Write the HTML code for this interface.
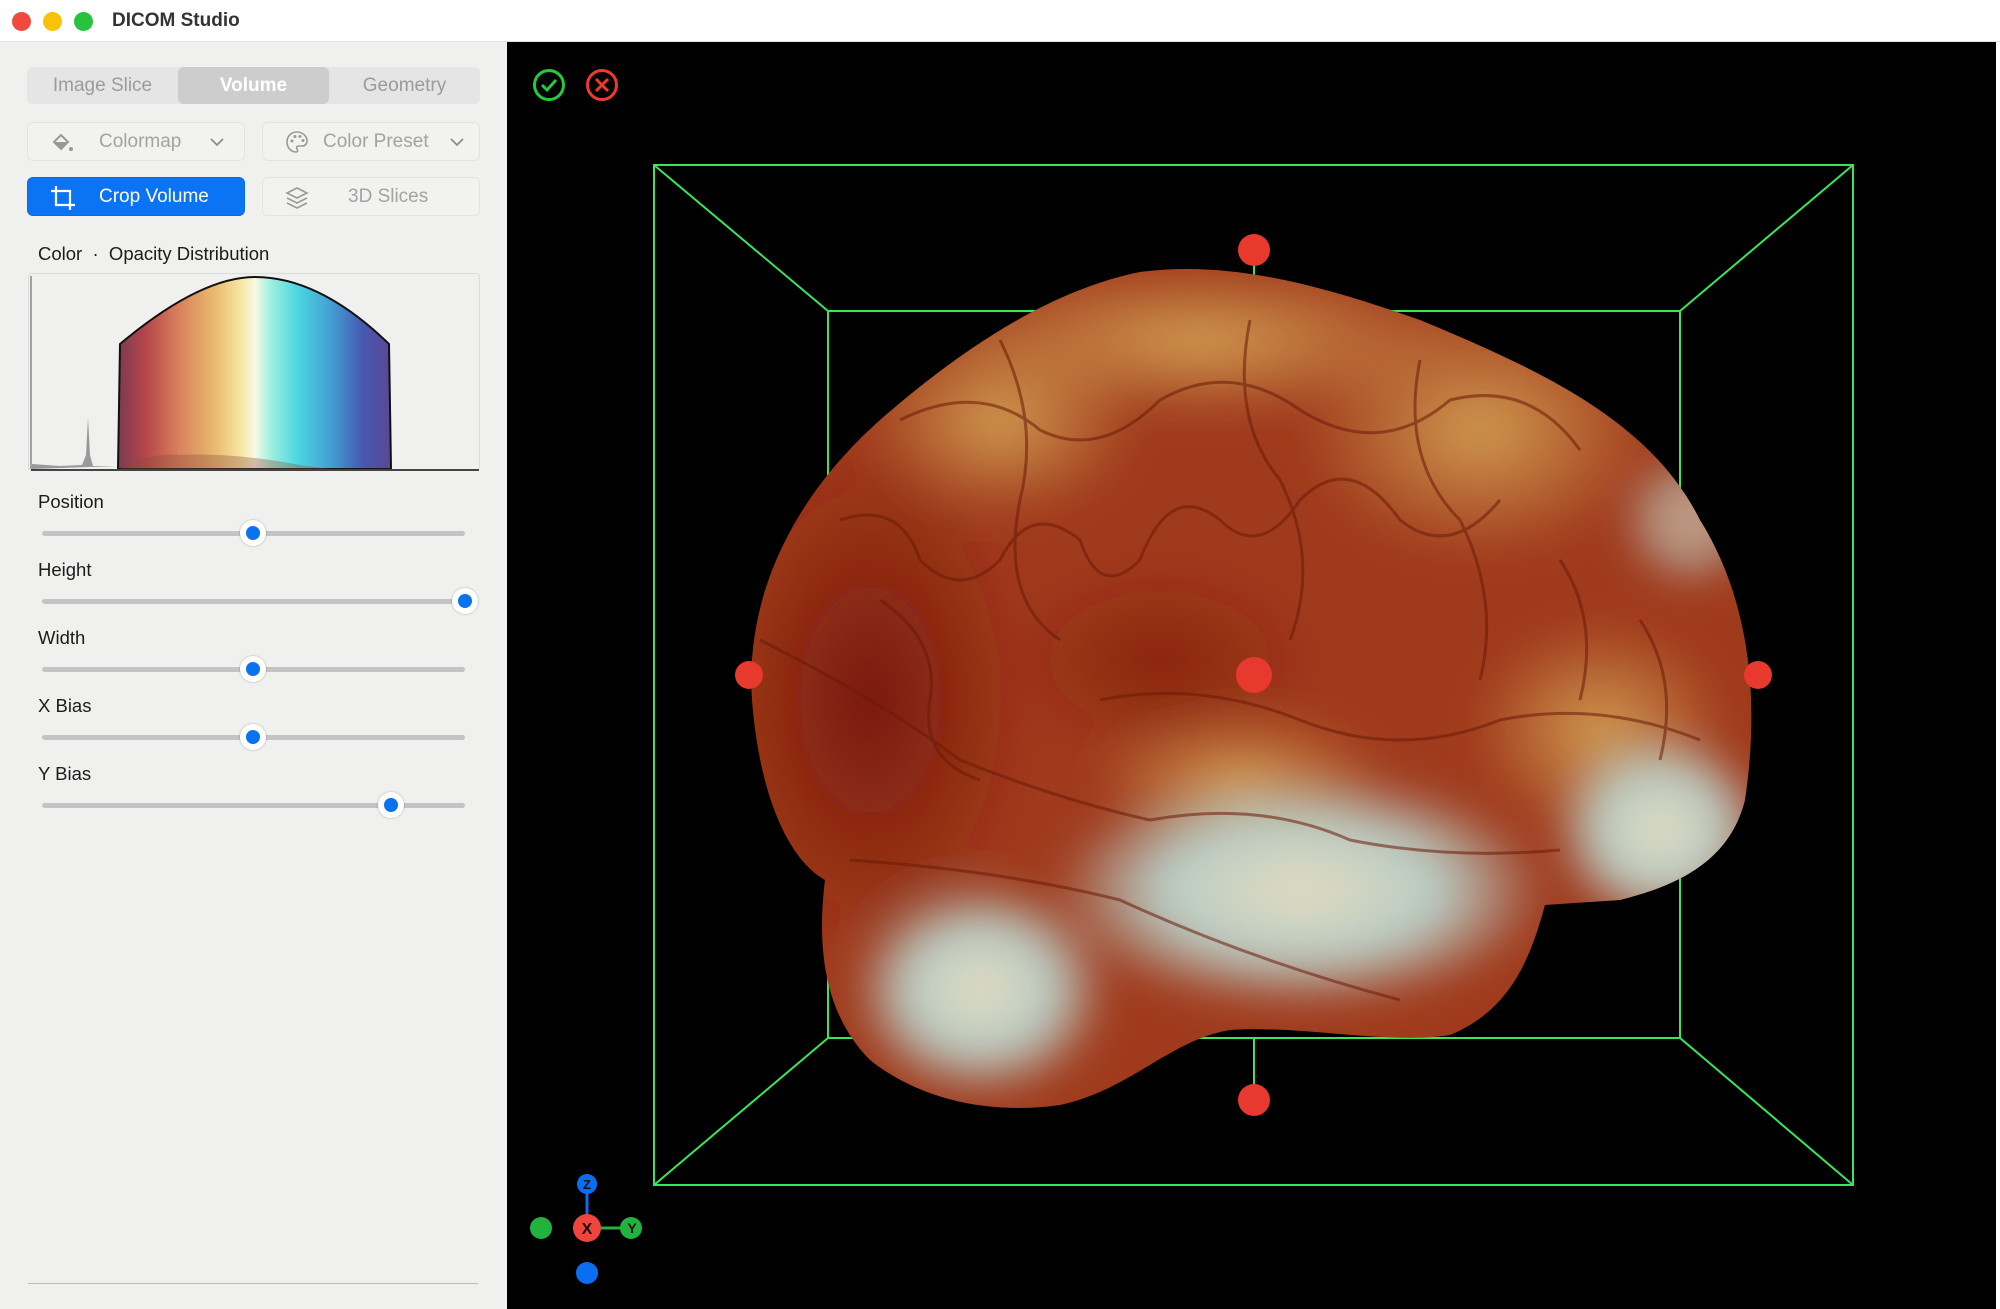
<!DOCTYPE html>
<html><head><meta charset="utf-8"><style>
*{margin:0;padding:0;box-sizing:border-box}
body{width:2000px;height:1309px;overflow:hidden;background:#fff;font-family:"Liberation Sans",sans-serif;position:relative}
.title{position:absolute;left:0;top:0;width:2000px;height:42px;background:#fff;border-bottom:1px solid #e2e2e2}
.dot{position:absolute;top:12px;width:19px;height:19px;border-radius:50%}
.ttxt{position:absolute;left:112px;top:10px;font-size:19px;font-weight:bold;color:#333}
.side{position:absolute;left:0;top:42px;width:507px;height:1267px;background:#f0f0ef}
.seg{position:absolute;left:27px;top:67px;width:453px;height:37px;background:#e5e5e5;border-radius:6px}
.seg div{position:absolute;top:0;height:37px;width:151px;text-align:center;line-height:37px;font-size:19px;color:#9b9b9b}
.btn{position:absolute;height:39px;border:1px solid #e3e3e3;border-radius:6px;background:#f2f2f1;font-size:19px;color:#a3a3a3;line-height:37px}
.lbl{position:absolute;left:38px;font-size:18.5px;color:#1c1c1c}
.track{position:absolute;left:42px;width:423px;height:5px;background:#c4c4c4;border-radius:3px}
.thumb{position:absolute;width:26px;height:26px;border-radius:50%;background:#fff;box-shadow:0 0 2px rgba(0,0,0,.3)}
.thumb:after{content:"";position:absolute;left:6px;top:6px;width:14px;height:14px;border-radius:50%;background:#0a72f0}
.view{position:absolute;left:507px;top:42px;width:1489px;height:1267px;background:#000}
</style></head><body>
<div class="title">
<div class="dot" style="left:12px;background:#f0493f"></div>
<div class="dot" style="left:43px;background:#f8c10a"></div>
<div class="dot" style="left:74px;background:#27c23f"></div>
<div class="ttxt">DICOM Studio</div>
</div>
<div class="side"></div>
<div class="seg">
<div style="left:0">Image Slice</div>
<div style="left:151px;background:#cdcdcd;border-radius:6px;color:#fff;font-weight:bold">Volume</div>
<div style="left:302px">Geometry</div>
</div>
<div class="btn" style="left:27px;top:122px;width:218px">
<svg style="position:absolute;left:22px;top:9px" width="26" height="22" viewBox="0 0 26 22"><path d="M4 10 L11 3 L18 10 L11 17 Z" fill="none" stroke="#999" stroke-width="2"/><path d="M4 10 L18 10 L11 17 Z" fill="#999"/><circle cx="21" cy="17" r="2" fill="#999"/></svg>
<span style="position:absolute;left:71px">Colormap</span>
<svg style="position:absolute;left:182px;top:15px" width="14" height="9"><path d="M1 1 L7 7 L13 1" fill="none" stroke="#888" stroke-width="1.6"/></svg>
</div>
<div class="btn" style="left:262px;top:122px;width:218px">
<svg style="position:absolute;left:22px;top:7px" width="24" height="24" viewBox="0 0 24 24"><path d="M12 2 C6 2 2 6.5 2 12 C2 17.5 6 22 11 22 C13 22 13 20 12 19 C11 17 12 16 14 16 L17 16 C20 16 22 14 22 11 C22 6 17.5 2 12 2 Z" fill="none" stroke="#999" stroke-width="1.6"/><circle cx="7" cy="11" r="1.5" fill="#999"/><circle cx="10" cy="6.5" r="1.5" fill="#999"/><circle cx="15" cy="6.5" r="1.5" fill="#999"/><circle cx="18" cy="10.5" r="1.5" fill="#999"/></svg>
<span style="position:absolute;left:60px">Color Preset</span>
<svg style="position:absolute;left:187px;top:15px" width="14" height="9"><path d="M1 1 L7 7 L13 1" fill="none" stroke="#888" stroke-width="1.6"/></svg>
</div>
<div class="btn" style="left:27px;top:177px;width:218px;background:#0b74f5;border-color:#0a6ae0;color:#fff">
<svg style="position:absolute;left:22px;top:7px" width="26" height="26" viewBox="0 0 26 26"><path d="M6 1 L6 20 L25 20 M1 6 L20 6 L20 25" fill="none" stroke="#fff" stroke-width="2.2"/></svg>
<span style="position:absolute;left:71px">Crop Volume</span>
</div>
<div class="btn" style="left:262px;top:177px;width:218px">
<svg style="position:absolute;left:22px;top:8px" width="24" height="24" viewBox="0 0 24 24"><path d="M12 2 L22 7 L12 12 L2 7 Z" fill="none" stroke="#999" stroke-width="1.6"/><path d="M2 12 L12 17 L22 12 M2 17 L12 22 L22 17" fill="none" stroke="#999" stroke-width="1.6"/></svg>
<span style="position:absolute;left:85px">3D Slices</span>
</div>
<div class="lbl" style="top:243px">Color &nbsp;·&nbsp; Opacity Distribution</div>
<div style="position:absolute;left:28px;top:273px;width:452px;height:198px;border:1px solid #dcdcdc;border-radius:4px"></div>
<svg style="position:absolute;left:0;top:0" width="507" height="480">
<defs><linearGradient id="cg" x1="119" x2="390" y1="0" y2="0" gradientUnits="userSpaceOnUse">
<stop offset="0" stop-color="#7e3a50"/><stop offset=".1" stop-color="#b5474a"/><stop offset=".22" stop-color="#d9805c"/><stop offset=".35" stop-color="#e9b86e"/><stop offset=".45" stop-color="#f6e7a2"/><stop offset=".5" stop-color="#fbf8e6"/><stop offset=".56" stop-color="#9ff0de"/><stop offset=".66" stop-color="#4cd6e2"/><stop offset=".78" stop-color="#43a0d4"/><stop offset=".9" stop-color="#4658b0"/><stop offset="1" stop-color="#5a4894"/></linearGradient></defs>
<path d="M31 276 L31 469" stroke="#888" stroke-width="1.5"/>
<path d="M32 469 L32 464 L60 466 L82 465 L86 455 L88 417 L90 455 L93 466 L118 466 Z" fill="#999"/>
<path d="M118 469 L120 344 Q200 277 255 277 Q320 277 389 344 L391 469 Z" fill="url(#cg)" stroke="#111" stroke-width="2"/>
<path d="M120 469 Q150 452 180 455 Q230 452 300 465 L330 469 Z" fill="#8a4a3a" opacity=".35"/>
<path d="M31 470 L479 470" stroke="#444" stroke-width="2"/>
</svg>
<div class="lbl" style="top:491px">Position</div>
<div class="track" style="top:531px"></div><div class="thumb" style="left:240px;top:520px"></div>
<div class="lbl" style="top:559px">Height</div>
<div class="track" style="top:599px"></div><div class="thumb" style="left:452px;top:588px"></div>
<div class="lbl" style="top:627px">Width</div>
<div class="track" style="top:667px"></div><div class="thumb" style="left:240px;top:656px"></div>
<div class="lbl" style="top:695px">X Bias</div>
<div class="track" style="top:735px"></div><div class="thumb" style="left:240px;top:724px"></div>
<div class="lbl" style="top:763px">Y Bias</div>
<div class="track" style="top:803px"></div><div class="thumb" style="left:378px;top:792px"></div>
<div style="position:absolute;left:28px;top:1283px;width:450px;height:1px;background:#bbb"></div>

<div class="view"></div>
<svg style="position:absolute;left:0;top:0" width="2000" height="1309">
<defs>
<clipPath id="bc"><path d="M752 700 C745 600 790 500 880 420 C960 350 1050 290 1140 272 C1230 260 1320 285 1420 320 C1540 370 1650 420 1700 520 C1750 600 1760 700 1745 800 C1730 860 1680 885 1620 900 L1545 905 C1530 960 1510 1010 1450 1035 C1390 1045 1300 1025 1230 1030 C1170 1040 1130 1090 1060 1105 C990 1115 920 1100 870 1060 C830 1020 815 960 825 880 C790 860 760 800 752 700 Z"/></clipPath>
<radialGradient id="g1" cx="50%" cy="50%" r="50%"><stop offset="0" stop-color="#e4dcc0"/><stop offset=".55" stop-color="#b9ccc4"/><stop offset="1" stop-color="#b9ccc4" stop-opacity="0"/></radialGradient>
<radialGradient id="g2" cx="50%" cy="50%" r="50%"><stop offset="0" stop-color="#d09a50"/><stop offset="1" stop-color="#d09a50" stop-opacity="0"/></radialGradient>
<radialGradient id="g3" cx="50%" cy="50%" r="50%"><stop offset="0" stop-color="#7a1a0c"/><stop offset="1" stop-color="#7a1a0c" stop-opacity="0"/></radialGradient>
<filter id="bl"><feGaussianBlur stdDeviation="18"/></filter>
</defs>
<g stroke="#37e65a" stroke-width="2" fill="none">
<rect x="654" y="165" width="1199" height="1020"/>
<rect x="828" y="311" width="852" height="727"/>
<path d="M654 165 L828 311 M1853 165 L1680 311 M654 1185 L828 1038 M1853 1185 L1680 1038 M1254 250 L1254 311 M1254 1038 L1254 1100"/>
</g>
<g clip-path="url(#bc)">
<rect x="740" y="260" width="1020" height="860" fill="#a03a1c"/>
<g filter="url(#bl)">
<ellipse cx="1200" cy="340" rx="280" ry="80" fill="url(#g2)"/>
<ellipse cx="1480" cy="430" rx="180" ry="130" fill="url(#g2)"/>
<ellipse cx="1000" cy="420" rx="140" ry="100" fill="url(#g2)"/>
<ellipse cx="870" cy="700" rx="160" ry="260" fill="url(#g3)"/>
<ellipse cx="1160" cy="660" rx="160" ry="100" fill="url(#g3)" opacity=".6"/>
<ellipse cx="1240" cy="780" rx="150" ry="70" fill="url(#g2)"/>
<ellipse cx="1600" cy="730" rx="130" ry="110" fill="url(#g2)"/>
<ellipse cx="1300" cy="890" rx="250" ry="120" fill="url(#g1)"/>
<ellipse cx="1660" cy="830" rx="110" ry="100" fill="url(#g1)"/>
<ellipse cx="980" cy="990" rx="130" ry="110" fill="url(#g1)"/>
<ellipse cx="1690" cy="520" rx="70" ry="70" fill="url(#g1)" opacity=".6"/>
</g>
<g fill="none" stroke="#6a1a08" stroke-width="3" opacity=".55">
<path d="M840 520 Q900 500 920 560 Q960 600 1000 560 Q1030 500 1080 540 Q1100 600 1140 560 Q1170 480 1220 520 Q1260 560 1300 500 Q1350 450 1400 520 Q1450 560 1500 500"/>
<path d="M900 420 Q980 380 1040 430 Q1100 460 1160 400 Q1230 360 1300 410 Q1380 460 1450 400 Q1530 380 1580 450"/>
<path d="M1000 340 Q1040 420 1020 500 Q1000 600 1060 640 M1250 320 Q1230 420 1280 480 Q1320 560 1290 640 M1420 360 Q1400 460 1460 520 Q1500 600 1480 680"/>
<path d="M760 640 Q880 700 960 760 Q1060 800 1150 820 Q1260 800 1350 840 Q1450 860 1560 850"/>
<path d="M850 860 Q1000 870 1120 900 Q1250 960 1400 1000"/>
<path d="M1100 700 Q1200 680 1300 720 Q1400 760 1500 720 Q1600 700 1700 740"/>
<path d="M880 600 Q940 640 930 700 Q920 760 980 780 M1560 560 Q1600 620 1580 700 M1640 620 Q1680 680 1660 760"/>
</g>
</g>
<g fill="#e8392e">
<circle cx="1254" cy="250" r="16"/><circle cx="1254" cy="1100" r="16"/><circle cx="1254" cy="675" r="18"/><circle cx="749" cy="675" r="14"/><circle cx="1758" cy="675" r="14"/>
</g>
<g fill="none" stroke-width="3">
<circle cx="549" cy="85" r="14.5" stroke="#24c93e"/><path d="M542 85 L547 90 L556 80" stroke="#24c93e"/>
<circle cx="602" cy="85" r="14.5" stroke="#f0382f"/><path d="M596 79 L608 91 M608 79 L596 91" stroke="#f0382f"/>
</g>
<path d="M587 1184 L587 1228" stroke="#0a6ef0" stroke-width="3"/>
<path d="M587 1228 L631 1228" stroke="#22b33e" stroke-width="3"/>
<circle cx="541" cy="1228" r="11" fill="#22b33e"/>
<circle cx="587" cy="1273" r="11" fill="#0a6ef0"/>
<circle cx="587" cy="1184" r="10" fill="#0a6ef0"/>
<circle cx="631" cy="1228" r="11" fill="#22b33e"/>
<circle cx="587" cy="1228" r="14" fill="#f0453c"/>
<g font-family="Liberation Sans,sans-serif" font-weight="bold" text-anchor="middle" fill="#111">
<text x="587" y="1189" font-size="13">Z</text><text x="587" y="1234" font-size="16">X</text><text x="632" y="1233" font-size="14">Y</text>
</g>
</svg>
</body></html>
